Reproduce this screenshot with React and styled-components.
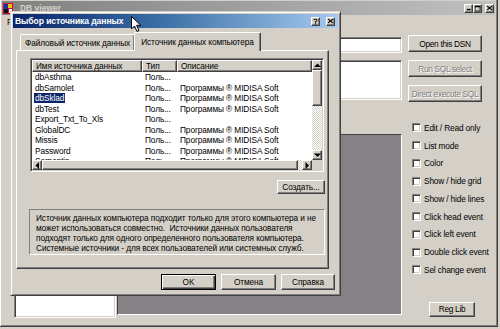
import React from "react";
import styled, { createGlobalStyle, css } from "styled-components";

const DESC = "Программы ® MIDISA Soft";

const sources = [
  { name: "dbAsthma", desc: "" },
  { name: "dbSamolet", desc: DESC },
  { name: "dbSklad", desc: DESC, selected: true },
  { name: "dbTest", desc: DESC },
  { name: "Export_Txt_To_Xls", desc: "" },
  { name: "GlobalDC", desc: DESC },
  { name: "Missis", desc: DESC },
  { name: "Password", desc: DESC },
  { name: "Serpentin", desc: DESC },
];

const options = [
  "Edit / Read only",
  "List mode",
  "Color",
  "Show / hide grid",
  "Show / hide lines",
  "Click head event",
  "Click left event",
  "Double click event",
  "Sel change event",
];

const infoLines = [
  "Источник данных компьютера подходит только для этого компьютера и не",
  "может использоваться совместно.  Источники данных пользователя",
  "подходят только для одного определенного пользователя компьютера.",
  "Системные источники - для всех пользователей или системных служб.",
];

const Arrow = ({ dir }) => {
  const pts = {
    up: "0,4 3.5,0.5 7,4",
    down: "0,0.5 3.5,4 7,0.5",
    left: "4,0 0.5,3.5 4,7",
    right: "0.5,0 4,3.5 0.5,7",
  }[dir];
  const vertical = dir === "up" || dir === "down";
  return (
    <svg width={vertical ? 7 : 5} height={vertical ? 5 : 7} viewBox={vertical ? "0 0 7 5" : "0 0 5 7"}>
      <polygon points={pts} fill="#000" />
    </svg>
  );
};

const AppIcon = () => (
  <svg width="10" height="11" viewBox="0 0 10 11">
    <rect x="0" y="0" width="10" height="11" fill="#c8102e" />
    <rect x="1" y="1" width="4" height="5" fill="#1d2fa8" />
    <rect x="5" y="1" width="4" height="4" fill="#f2c200" />
    <rect x="1" y="6" width="4" height="4" fill="#111" />
    <rect x="6" y="6" width="3" height="4" fill="#fff" />
  </svg>
);

const CaptionGlyph = ({ kind }) => {
  if (kind === "min") return <svg width="6" height="6" viewBox="0 0 6 6"><rect x="0" y="4" width="5" height="2" fill="#000" /></svg>;
  if (kind === "max")
    return (
      <svg width="7" height="7" viewBox="0 0 7 7">
        <rect x="0.5" y="0.5" width="6" height="6" fill="none" stroke="#000" />
        <rect x="0" y="0" width="7" height="2" fill="#000" />
      </svg>
    );
  if (kind === "help")
    return (
      <svg width="5" height="7" viewBox="0 0 5 7">
        <path d="M0.5 2 Q0.5 0.5 2.5 0.5 Q4.5 0.5 4.5 2 Q4.5 3 2.5 3.6 L2.5 4.6" fill="none" stroke="#000" strokeWidth="1.3" />
        <rect x="1.8" y="5.5" width="1.5" height="1.5" fill="#000" />
      </svg>
    );
  return (
    <svg width="7" height="6" viewBox="0 0 7 6">
      <path d="M0.5 0.5 L6.5 5.5 M6.5 0.5 L0.5 5.5" stroke="#000" strokeWidth="1.5" />
    </svg>
  );
};

const Cursor = () => (
  <CursorLayer>
    <svg width="11" height="17" viewBox="0 0 11 17">
      <polygon points="0.5,0.5 0.5,13 3.5,10 6,15.5 8,14.6 5.6,9.3 9.8,9.3" fill="#fff" stroke="#000" strokeWidth="1" />
    </svg>
  </CursorLayer>
);

const App = () => {
  return (
    <>
      <GlobalStyle />
      <Desktop>
        <MainWindow>
          <TitleBar>
            <AppIcon />
            <TitleText inactive>DB viewer</TitleText>
            <CaptionButtons>
              <CaptionButton><CaptionGlyph kind="min" /></CaptionButton>
              <CaptionButton><CaptionGlyph kind="max" /></CaptionButton>
              <CaptionButton gap><CaptionGlyph kind="close" /></CaptionButton>
            </CaptionButtons>
          </TitleBar>
          <MenuBar>
            <MenuItem>File</MenuItem>
          </MenuBar>
          <MainBody>
            <WorkArea>
              <EditField />
              <MemoField />
              <BottomRow>
                <TableList />
                <GridArea />
              </BottomRow>
            </WorkArea>
            <SideColumn>
              <Button latin width={74} height={17}>Open this DSN</Button>
              <Button latin width={74} height={17} disabled>Run SQL select</Button>
              <Button latin width={74} height={17} disabled>Direct execute SQL</Button>
              <OptionList>
                {options.map((o) => (
                  <OptionRow key={o}>
                    <CheckBox />
                    <span>{o}</span>
                  </OptionRow>
                ))}
              </OptionList>
              <RegButton latin width={46} height={15}>Reg Lib</RegButton>
            </SideColumn>
          </MainBody>
        </MainWindow>

        <Dialog>
          <TitleBar active>
            <TitleText>Выбор источника данных</TitleText>
            <CaptionButtons>
              <CaptionButton><CaptionGlyph kind="help" /></CaptionButton>
              <CaptionButton wide><CaptionGlyph kind="close" /></CaptionButton>
            </CaptionButtons>
          </TitleBar>
          <TabStrip>
            <Tab>Файловый источник данных</Tab>
            <Tab active>Источник данных компьютера</Tab>
          </TabStrip>
          <TabPanel>
            <ListView>
              <ListContent>
                <HeaderRow>
                  <HeaderCell>Имя источника данных</HeaderCell>
                  <HeaderCell>Тип</HeaderCell>
                  <HeaderCell>Описание</HeaderCell>
                </HeaderRow>
                {sources.map((s) => (
                  <ListRow key={s.name}>
                    <Cell>
                      <NameText selected={s.selected}>{s.name}</NameText>
                    </Cell>
                    <Cell>Поль...</Cell>
                    <Cell>{s.desc}</Cell>
                  </ListRow>
                ))}
              </ListContent>
              <VScroll>
                <ScrollArrow><Arrow dir="up" /></ScrollArrow>
                <VThumb />
                <Track />
                <ScrollArrow><Arrow dir="down" /></ScrollArrow>
              </VScroll>
              <HScroll>
                <ScrollArrow><Arrow dir="left" /></ScrollArrow>
                <HThumb />
                <Track />
                <ScrollArrow><Arrow dir="right" /></ScrollArrow>
              </HScroll>
              <Corner />
            </ListView>
            <CreateRow>
              <Button width={48} height={14}>Создать...</Button>
            </CreateRow>
            <InfoBox>
              {infoLines.map((line) => (
                <InfoLine key={line}>{line}</InfoLine>
              ))}
            </InfoBox>
          </TabPanel>
          <DialogButtons>
            <Button width={55} height={16} isDefault>OK</Button>
            <Button width={55} height={16}>Отмена</Button>
            <Button width={54} height={16}>Справка</Button>
          </DialogButtons>
        </Dialog>
        <Cursor />
      </Desktop>
    </>
  );
};

export default App;

const GlobalStyle = createGlobalStyle`
  html, body {
    margin: 0;
    padding: 0;
  }
  body {
    background: #d4d0c8;
    font-family: "Liberation Sans", Arial, sans-serif;
    font-size: 8.3px;
    letter-spacing: -0.1px;
    color: #000;
    overflow: hidden;
  }
  * {
    box-sizing: border-box;
  }
`;

const windowFrame = css`
  border: 1px solid;
  border-color: #d4d0c8 #404040 #404040 #d4d0c8;
  box-shadow: inset 1px 1px 0 #fff, inset -1px -1px 0 #808080;
  padding: 2px;
`;

const raised = css`
  border: 1px solid;
  border-color: #fff #404040 #404040 #fff;
  box-shadow: inset -1px -1px 0 #808080;
`;

const sunken = css`
  border: 1px solid;
  border-color: #808080 #fff #fff #808080;
  box-shadow: inset 1px 1px 0 #404040, inset -1px -1px 0 #d4d0c8;
`;

const Desktop = styled.div`
  position: relative;
  width: 500px;
  height: 329px;
  overflow: hidden;
  background: #d4d0c8;
`;

const MainWindow = styled.div`
  position: absolute;
  left: -1px;
  top: -2px;
  width: 499px;
  height: 329px;
  display: flex;
  flex-direction: column;
  background: #d4d0c8;
  ${windowFrame};
`;

const TitleBar = styled.div`
  display: flex;
  align-items: center;
  height: 14px;
  flex-shrink: 0;
  padding: 0 ${({ active }) => (active ? "3px" : "1px")} 0 ${({ active }) => (active ? "2px" : "1px")};
  background: ${({ active }) =>
    active
      ? "linear-gradient(to right, #0a246a 0%, #3a6ea5 45%, #a6caf0 100%)"
      : "linear-gradient(to right, #808080, #c0c0c0)"};
`;

const TitleText = styled.span`
  flex: 1;
  margin-left: ${({ inactive }) => (inactive ? "7px" : "0")};
  color: ${({ inactive }) => (inactive ? "#d4d0c8" : "#fff")};
  font-weight: bold;
  font-size: 8.6px;
  white-space: nowrap;
  letter-spacing: -0.1px;
`;

const CaptionButtons = styled.div`
  display: flex;
  align-items: center;
`;

const CaptionButton = styled.div`
  display: flex;
  align-items: center;
  justify-content: center;
  width: 9px;
  height: 9px;
  margin-left: ${({ gap, wide }) => (gap ? "3px" : wide ? "6px" : "0")};
  background: #d4d0c8;
  ${raised};
  svg {
    transform: scale(0.85);
  }
`;

const MenuBar = styled.div`
  display: flex;
  align-items: center;
  height: 14px;
  gap: 10px;
  padding-left: 5px;
  flex-shrink: 0;
`;

const MenuItem = styled.span`
  color: #000;
`;

const MainBody = styled.div`
  flex: 1;
  display: flex;
`;

const WorkArea = styled.div`
  flex: 1;
  display: flex;
  flex-direction: column;
  padding-left: 12px;
`;

const EditField = styled.div`
  margin-top: 8px;
  height: 16px;
  background: #fff;
  ${sunken};
`;

const MemoField = styled.div`
  margin-top: 7px;
  height: 40px;
  background: #fff;
  ${sunken};
`;

const BottomRow = styled.div`
  display: flex;
  align-items: flex-start;
  margin-top: 34px;
`;

const TableList = styled.div`
  width: 102px;
  height: 184px;
  background: #fff;
  ${sunken};
`;

const GridArea = styled.div`
  flex: 1;
  height: 181px;
  margin-left: 1px;
  background: #858185;
  border: 1px solid;
  border-color: #404040 #fff #fff #404040;
`;

const SideColumn = styled.div`
  width: 93px;
  display: flex;
  flex-direction: column;
  align-items: flex-start;
  padding-top: 6px;
  padding-left: 6px;
  gap: 8px;
`;

const Button = styled.div`
  display: flex;
  align-items: center;
  justify-content: center;
  width: ${({ width }) => width}px;
  height: ${({ height }) => height}px;
  background: #d4d0c8;
  white-space: nowrap;
  letter-spacing: ${({ latin }) => (latin ? "-0.3px" : "-0.1px")};
  color: ${({ disabled }) => (disabled ? "#808080" : "#000")};
  text-shadow: ${({ disabled }) => (disabled ? "1px 1px 0 #fff" : "none")};
  ${({ isDefault }) =>
    isDefault
      ? css`
          border: 1px solid #000;
          box-shadow: inset 1px 1px 0 #fff, inset -1px -1px 0 #404040, inset -2px -2px 0 #808080;
        `
      : raised};
`;

const OptionList = styled.div`
  display: flex;
  flex-direction: column;
  margin-top: 9px;
  padding-left: 4px;
`;

const OptionRow = styled.div`
  display: flex;
  align-items: center;
  height: 17.75px;
  gap: 3px;
  white-space: nowrap;
  letter-spacing: -0.15px;
`;

const CheckBox = styled.div`
  width: 9px;
  height: 9px;
  background: #fff;
  ${sunken};
`;

const RegButton = styled(Button)`
  margin-top: 15px;
  margin-left: 21px;
`;

const Dialog = styled.div`
  position: absolute;
  left: 10px;
  top: 11px;
  width: 331px;
  height: 285px;
  display: flex;
  flex-direction: column;
  background: #d4d0c8;
  ${windowFrame};
`;

const TabStrip = styled.div`
  display: flex;
  align-items: flex-end;
  height: 20px;
  padding-left: 5px;
  margin-top: 2px;
  position: relative;
  z-index: 1;
`;

const Tab = styled.div`
  display: flex;
  align-items: center;
  height: ${({ active }) => (active ? "19px" : "16px")};
  padding: 0 ${({ active }) => (active ? "6px" : "4px")};
  margin-left: ${({ active }) => (active ? "-1px" : "2px")};
  margin-bottom: ${({ active }) => (active ? "-1px" : "0")};
  background: #d4d0c8;
  border: 1px solid;
  border-bottom: none;
  border-color: #fff #404040 transparent #fff;
  border-radius: 2px 2px 0 0;
  box-shadow: inset -1px 0 0 #808080;
  white-space: nowrap;
`;

const TabPanel = styled.div`
  height: 219px;
  margin-left: 3px;
  margin-right: 9px;
  display: flex;
  flex-direction: column;
  padding: 7px 3px 0 13px;
  border: 1px solid;
  border-color: #fff #404040 #404040 #fff;
  box-shadow: inset -1px -1px 0 #808080;
`;

const ListView = styled.div`
  width: 294px;
  height: 114px;
  display: grid;
  grid-template-columns: 1fr 10px;
  grid-template-rows: 1fr 10px;
  background: #fff;
  ${sunken};
  padding: 1px;
`;

const ListContent = styled.div`
  overflow: hidden;
  background: #fff;
`;

const columns = css`
  display: grid;
  grid-template-columns: 110px 35px 1fr;
`;

const HeaderRow = styled.div`
  ${columns};
  height: 12px;
`;

const HeaderCell = styled.div`
  display: flex;
  align-items: center;
  padding-left: 3px;
  background: #d4d0c8;
  white-space: nowrap;
  overflow: hidden;
  ${raised};
`;

const ListRow = styled.div`
  ${columns};
  height: 10.5px;
  align-items: center;
`;

const Cell = styled.div`
  padding-left: 3px;
  white-space: nowrap;
  overflow: hidden;
  line-height: 10.5px;
`;

const NameText = styled.span`
  padding: 0 1px;
  margin-left: -1px;
  background: ${({ selected }) => (selected ? "#0a246a" : "transparent")};
  color: ${({ selected }) => (selected ? "#fff" : "#000")};
`;

const VScroll = styled.div`
  display: flex;
  flex-direction: column;
`;

const HScroll = styled.div`
  display: flex;
`;

const ScrollArrow = styled.div`
  display: flex;
  align-items: center;
  justify-content: center;
  flex: 0 0 10px;
  min-height: 10px;
  background: #d4d0c8;
  ${raised};
`;

const VThumb = styled.div`
  flex: 0 0 36px;
  background: #d4d0c8;
  ${raised};
`;

const HThumb = styled.div`
  flex: 0 0 256px;
  background: #d4d0c8;
  ${raised};
`;

const Track = styled.div`
  flex: 1;
  background: repeating-conic-gradient(#fff 0 25%, #d4d0c8 0 50%) 0 0 / 2px 2px;
`;

const Corner = styled.div`
  background: #d4d0c8;
`;

const CreateRow = styled.div`
  display: flex;
  justify-content: flex-end;
  margin-top: 8px;
`;

const InfoBox = styled.div`
  margin-top: 15px;
  margin-left: -1px;
  width: 296px;
  height: 46px;
  padding: 3px 2px 0 6px;
  line-height: 10px;
  border: 1px solid;
  border-color: #808080 #fff #fff #808080;
`;

const InfoLine = styled.div`
  white-space: pre;
  overflow: hidden;
`;

const DialogButtons = styled.div`
  display: flex;
  justify-content: flex-end;
  gap: 5px;
  margin-top: 5px;
  padding-right: 3px;
`;

const CursorLayer = styled.div`
  position: absolute;
  left: 131px;
  top: 16px;
  width: 11px;
  height: 17px;
  pointer-events: none;
`;
